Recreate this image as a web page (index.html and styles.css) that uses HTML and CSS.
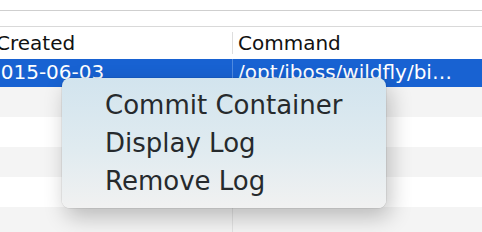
FILE: index.html
```html
<!DOCTYPE html>
<html lang="en">
  <head>
    <link rel="stylesheet" href="styles.css">
    <meta charset="UTF-8" />
    <title>Containers</title>
  </head>
  <body>
    <div class="window">
      <div class="toolbar"></div>
      <div class="spacer"></div>

      <div class="table">
        <!-- Header -->
        <div class="row header">
          <div class="cell col-created">Created</div>
          <div class="cell col-command">Command</div>
        </div>
        <div class="row selected">
          <div class="cell col-created">2015-06-03</div>
          <div class="cell col-command">/opt/jboss/wildfly/bi…</div>
        </div>
        <div class="row alt"><div class="cell col-created"></div><div class="cell col-command"></div></div>
        <div class="row"><div class="cell col-created"></div><div class="cell col-command"></div></div>
        <div class="row alt"><div class="cell col-created"></div><div class="cell col-command"></div></div>
        <div class="row"><div class="cell col-created"></div><div class="cell col-command"></div></div>
        <div class="row alt"><div class="cell col-created"></div><div class="cell col-command"></div></div>
      </div>

      <!-- Context menu -->
      <ul class="menu">
        <li>Commit Container</li>
        <li>Display Log</li>
        <li>Remove Log</li>
      </ul>
    </div>
  </body>
</html>
```

FILE: styles.css
```css
* {
  margin: 0;
  padding: 0;
  box-sizing: border-box;
}

body {
  background: #fff;
  font-family: "DejaVu Sans", sans-serif;
  overflow: hidden;
  width: 482px;
  height: 232px;
}

.window {
  position: relative;
  height: 232px;
  overflow: hidden;
}

.toolbar {
  height: 11px;
  border-bottom: 1px solid #cfcfcf;
}
.spacer {
  height: 16px;
  border-bottom: 1px solid #d9d9d9;
}

/* Table */
.table {
  margin-left: -20px;
}
.row {
  display: flex;
  height: 30px;
  background: #fff;
}
.row.alt {
  background: #f4f4f4;
}
.cell {
  font-size: 20px;
  line-height: 29px;
  white-space: nowrap;
  overflow: hidden;
}
.col-created {
  width: 253px;
  padding-left: 8px;
  border-right: 1px solid #e2e2e2;
}
.col-command {
  flex: 1;
  padding-left: 5px;
}

.header {
  height: 32px;
  align-items: center;
}
.header .cell {
  color: #111;
  line-height: 22px;
}
.header .col-created {
  padding-left: 16px;
  border-right: 1px solid #dedede;
}

.selected {
  background: #1862d2;
  height: 28px;
}
.selected .cell {
  color: #fff;
  line-height: 26px;
}
.selected .col-created {
  border-right-color: #4f8ae0;
}

/* Context menu */
.menu {
  position: absolute;
  left: 62px;
  top: 78px;
  width: 324px;
  height: 130px;
  list-style: none;
  padding: 8px 0 6px 43px;
  border-radius: 8px;
  background: linear-gradient(180deg, #d2e4ee 0%, #e0ebf0 55%, #f1f1f1 100%);
  box-shadow: 0 0 0 1px rgba(0, 0, 0, 0.06), 4px 9px 22px rgba(0, 0, 0, 0.24);
}
.menu li {
  font-size: 26px;
  line-height: 38px;
  color: #262a2d;
}
```
